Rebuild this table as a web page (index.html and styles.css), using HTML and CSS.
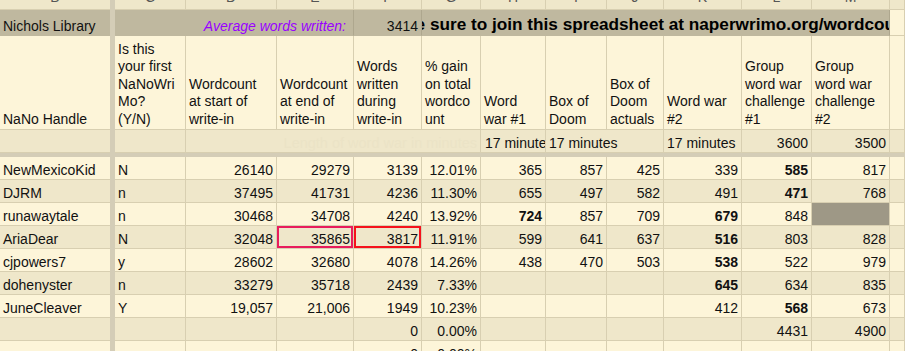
FILE: index.html
```html
<!DOCTYPE html>
<html>
<head>
<meta charset="utf-8">
<title>Nichols Library write-in</title>
<link rel="stylesheet" href="styles.css">
</head>
<body>
<div class="sheet">
  <div class="frz-v"></div>
  <div class="frz-h"></div>

  <div class="row letters">
    <div>B</div><div>C</div><div>D</div><div>E</div><div>F</div><div>G</div><div>H</div><div>I</div><div>J</div><div>K</div><div>L</div><div>M</div><div></div>
  </div>

  <div class="row top">
    <div>Nichols Library</div>
    <div class="span3 n avg">Average words written:</div>
    <div class="n">3414</div>
    <div class="span7 join">Be sure to join this spreadsheet at naperwrimo.org/wordcount</div>
    <div class="plain"></div>
  </div>

  <div class="row head lt">
    <div>NaNo Handle</div>
    <div>Is this<br>your first<br>NaNoWri<br>Mo?<br>(Y/N)</div>
    <div>Wordcount<br>at start of<br>write-in</div>
    <div>Wordcount<br>at end of<br>write-in</div>
    <div>Words<br>written<br>during<br>write-in</div>
    <div>% gain<br>on total<br>wordco<br>unt</div>
    <div>Word<br>war #1</div>
    <div>Box of<br>Doom</div>
    <div>Box of<br>Doom<br>actuals</div>
    <div>Word war<br>#2</div>
    <div>Group<br>word war<br>challenge<br>#1</div>
    <div>Group<br>word war<br>challenge<br>#2</div>
    <div></div>
  </div>

  <div class="row dk mins">
    <div></div>
    <div></div>
    <div class="span4 n ghost">Length of word war in minutes</div>
    <div class="clip">17 minutes</div>
    <div class="span2">17 minutes</div>
    <div>17 minutes</div>
    <div class="n">3600</div>
    <div class="n">3500</div>
    <div></div>
  </div>

  <div class="row lt">
    <div>NewMexicoKid</div><div>N</div><div class="n">26140</div><div class="n">29279</div><div class="n">3139</div><div class="n">12.01%</div><div class="n">365</div><div class="n">857</div><div class="n">425</div><div class="n">339</div><div class="n b">585</div><div class="n">817</div><div></div>
  </div>
  <div class="row dk">
    <div>DJRM</div><div>n</div><div class="n">37495</div><div class="n">41731</div><div class="n">4236</div><div class="n">11.30%</div><div class="n">655</div><div class="n">497</div><div class="n">582</div><div class="n">491</div><div class="n b">471</div><div class="n">768</div><div></div>
  </div>
  <div class="row lt">
    <div>runawaytale</div><div>n</div><div class="n">30468</div><div class="n">34708</div><div class="n">4240</div><div class="n">13.92%</div><div class="n b">724</div><div class="n">857</div><div class="n">709</div><div class="n b">679</div><div class="n">848</div><div class="grey"></div><div></div>
  </div>
  <div class="row dk">
    <div>AriaDear</div><div>N</div><div class="n">32048</div><div class="n sel-pink">35865</div><div class="n sel-red">3817</div><div class="n">11.91%</div><div class="n">599</div><div class="n">641</div><div class="n">637</div><div class="n b">516</div><div class="n">803</div><div class="n">828</div><div></div>
  </div>
  <div class="row lt">
    <div>cjpowers7</div><div>y</div><div class="n">28602</div><div class="n">32680</div><div class="n">4078</div><div class="n">14.26%</div><div class="n">438</div><div class="n">470</div><div class="n">503</div><div class="n b">538</div><div class="n">522</div><div class="n">979</div><div></div>
  </div>
  <div class="row dk">
    <div>dohenyster</div><div>n</div><div class="n">33279</div><div class="n">35718</div><div class="n">2439</div><div class="n">7.33%</div><div></div><div></div><div></div><div class="n b">645</div><div class="n">634</div><div class="n">835</div><div></div>
  </div>
  <div class="row lt">
    <div>JuneCleaver</div><div>Y</div><div class="n">19,057</div><div class="n">21,006</div><div class="n">1949</div><div class="n">10.23%</div><div></div><div></div><div></div><div class="n">412</div><div class="n b">568</div><div class="n">673</div><div></div>
  </div>
  <div class="row dk">
    <div></div><div></div><div></div><div></div><div class="n">0</div><div class="n">0.00%</div><div></div><div></div><div></div><div></div><div class="n">4431</div><div class="n">4900</div><div></div>
  </div>
  <div class="row lt">
    <div></div><div></div><div></div><div></div><div class="n">0</div><div class="n">0.00%</div><div></div><div></div><div></div><div></div><div></div><div></div><div></div>
  </div>
</div>
</body>
</html>
```

FILE: styles.css
```css
:root {
  --lt: #fdf5d9;
  --dk: #efe7ca;
  --grid: #d8cfb1;
  --frz: #d4cdb7;
  --tan: #bfb89f;
  --tanline: #aea78e;
}

html, body {
  margin: 0;
  height: 100%;
  overflow: hidden;
  background: var(--lt);
}

body {
  font-family: "Liberation Sans", Arial, sans-serif;
  font-size: 14px;
  color: #111;
}

.sheet {
  display: grid;
  width: 905px;
  grid-template-columns: 110px 5px 71px 91px 77px 68px 59px 65px 61px 57px 78px 70px 78px 1fr;
  grid-template-rows: 10px 26px 94px 23px 4px repeat(9, 23px);
}

.frz-v {
  grid-column: 2;
  grid-row: 1 / -1;
  background: var(--frz);
}

.frz-h {
  grid-column: 1 / -1;
  grid-row: 5;
  background: var(--frz);
}

.row {
  display: contents;
}

.row > div {
  display: flex;
  align-items: flex-end;
  overflow: hidden;
  white-space: nowrap;
  line-height: 17px;
  padding: 0 3px;
  border-right: 1px solid var(--grid);
  border-bottom: 1px solid var(--grid);
  min-width: 0;
}

.row > div:first-child {
  border-right: 0;
}

.lt > div { background: var(--lt); }
.dk > div { background: var(--dk); }

.n { justify-content: flex-end; }
.b { font-weight: 700; }

.span2 { grid-column: span 2; }
.span3 { grid-column: span 3; }
.span4 { grid-column: span 4; }
.span7 { grid-column: span 7; }

/* column letters */
.letters > div {
  background: var(--dk);
  justify-content: center;
  line-height: 14px;
  padding-bottom: 5px;
  color: #555;
}

/* title row */
.top > div {
  background: var(--tan);
  border-bottom-color: var(--tan);
  border-right-color: var(--tanline);
}
.top > .plain {
  background: var(--lt);
  border-bottom-color: var(--grid);
  border-right-color: var(--grid);
}
.top .avg {
  color: #9900ff;
  font-style: italic;
  padding-right: 7px;
}
.top > .join {
  display: block;
  padding: 4px 0 0 0;
  line-height: 20px;
  text-indent: -18.8px;
  font-size: 17.2px;
  font-weight: 700;
  color: #000;
}

/* header row */
.head > div {
  white-space: normal;
  line-height: 17.4px;
  padding-bottom: 1px;
}

/* minutes row */
.mins .ghost {
  color: #ebe3c6;
  font-size: 14.5px;
}
.mins .clip {
  padding-left: 4px;
}

.grey { background: #9e9886 !important; }

.sel-pink { box-shadow: inset 0 0 0 2px #e81c5c; }
.sel-red { box-shadow: inset 0 0 0 2px #f5121c; }
```
